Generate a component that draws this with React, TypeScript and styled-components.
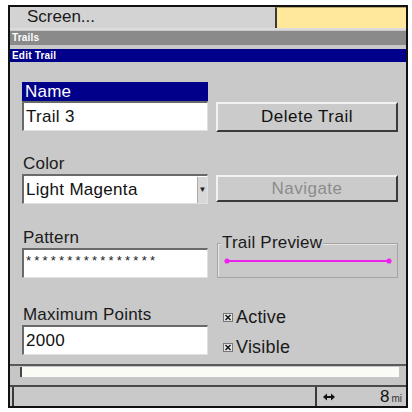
import React from "react";
import styled, { createGlobalStyle } from "styled-components";

const GlobalStyle = createGlobalStyle`
  html, body {
    margin: 0;
    padding: 0;
    background: #ffffff;
  }
  body {
    font-family: "Liberation Sans", Arial, sans-serif;
  }
`;

const Frame = styled.div`
  box-sizing: border-box;
  margin: 5px 0 0 8px;
  width: 400px;
  height: 403px;
  border: 2px solid #111;
  background: #c9c9c9;
  display: flex;
  flex-direction: column;
  color: #111;
`;

const TopBar = styled.div`
  display: flex;
  height: 21px;
  background: #d3d3d3;
  border-bottom: 2px solid #dcdcdc;
`;

const ScreenMenu = styled.div`
  flex: 1;
  padding-left: 17px;
  font-size: 17px;
  line-height: 20px;
  color: #1a1a1a;
`;

const YellowBox = styled.div`
  width: 129px;
  border-left: 2px solid #3a3a3a;
  border-top: 1px solid #b8a870;
  background: #ffe89c;
`;

const TitleBar = styled.div<{ $bg: string; $h: number; $gap: number }>`
  height: ${(p) => p.$h}px;
  margin-top: ${(p) => p.$gap}px;
  background: ${(p) => p.$bg};
  color: #fff;
  font-weight: bold;
  font-size: 10px;
  line-height: ${(p) => p.$h}px;
  padding-left: 2px;
  letter-spacing: 0.2px;
`;

const Body = styled.div`
  flex: 1;
  padding: 20px 0 0 12px;
  display: flex;
  flex-direction: column;
  background: #c9c9c9;
`;

const Row = styled.div<{ $gap: number }>`
  display: grid;
  grid-template-columns: 186px 182px;
  column-gap: 8px;
  margin-top: ${(p) => p.$gap}px;
`;

const Field = styled.div`
  display: flex;
  flex-direction: column;
`;

const Label = styled.div<{ $selected?: boolean }>`
  height: ${(p) => (p.$selected ? 19 : 20)}px;
  line-height: 19px;
  font-size: 17px;
  padding-left: ${(p) => (p.$selected ? 3 : 1)}px;
  background: ${(p) => (p.$selected ? "#00008a" : "transparent")};
  color: ${(p) => (p.$selected ? "#fff" : "#1a1a1a")};
  letter-spacing: 0.2px;
`;

const Input = styled.div`
  box-sizing: border-box;
  height: 30px;
  background: #fff;
  border-top: 2px solid #6a6a6a;
  border-left: 2px solid #6a6a6a;
  border-right: 1px solid #e0e0e0;
  border-bottom: 1px solid #e0e0e0;
  font-size: 17px;
  letter-spacing: 0.3px;
  line-height: 26px;
  padding-left: 2px;
  display: flex;
  align-items: center;
  justify-content: space-between;
  color: #111;
`;

const Stars = styled.span`
  font-size: 13px;
  letter-spacing: 3.2px;
  margin-top: -5px;
  color: #222;
`;

const DropArrow = styled.span`
  width: 9px;
  height: 26px;
  background: #d8d8d8;
  border-left: 1px solid #aaa;
  display: flex;
  align-items: center;
  justify-content: center;
  font-size: 8px;
  color: #222;
`;

const Button = styled.div<{ $disabled?: boolean; $h: number; $mb: number }>`
  box-sizing: border-box;
  align-self: end;
  height: ${(p) => p.$h}px;
  margin-bottom: ${(p) => p.$mb}px;
  background: #cbcbcb;
  border-top: 2px solid #f2f2f2;
  border-left: 2px solid #f2f2f2;
  border-right: 2px solid #3a3a3a;
  border-bottom: 2px solid #3a3a3a;
  display: flex;
  align-items: center;
  justify-content: center;
  font-size: 17px;
  letter-spacing: 0.5px;
  color: ${(p) => (p.$disabled ? "#8c8c8c" : "#111")};
`;

const Group = styled.div`
  align-self: end;
  display: flex;
  flex-direction: column;
  margin-left: 1px;
`;

const GroupTitle = styled.div`
  align-self: flex-start;
  position: relative;
  z-index: 1;
  margin: 0 0 -8px 4px;
  padding: 0 1px;
  background: #c9c9c9;
  font-size: 17px;
  line-height: 16px;
  letter-spacing: 0.2px;
  color: #1a1a1a;
`;

const GroupBox = styled.div`
  box-sizing: border-box;
  height: 35px;
  border: 1px solid #a4a4a4;
  box-shadow: inset 1px 1px 0 #e6e6e6;
  display: flex;
  align-items: center;
  padding: 0 0 0 6px;
`;

const Checks = styled.div`
  display: flex;
  flex-direction: column;
  gap: 10px;
  padding: 2px 0 0 7px;
`;

const CheckRow = styled.div`
  display: flex;
  align-items: center;
  gap: 3px;
  height: 20px;
  font-size: 18px;
  letter-spacing: 0.2px;
  color: #1a1a1a;
`;

const BottomArea = styled.div`
  height: 21px;
  border-top: 2px solid #5a5a5a;
  padding: 1px 7px 0 10px;
  box-sizing: border-box;
  background: #c6c6c6;
`;

const WhiteBar = styled.div`
  height: 10px;
  background: #fbfbf6;
  border-left: 2px solid #444;
`;

const StatusBar = styled.div`
  height: 19px;
  border-top: 2px solid #4a4a4a;
  display: flex;
  background: #c9c9c9;
`;

const StatusLeft = styled.div`
  flex: 1;
  margin-left: 2px;
  border-left: 2px solid #3a3a3a;
`;

const StatusRight = styled.div`
  box-sizing: border-box;
  width: 91px;
  border-left: 2px solid #3a3a3a;
  display: flex;
  align-items: center;
  justify-content: space-between;
  padding: 0 4px 0 6px;
  font-size: 17px;
  color: #111;
`;

const Unit = styled.span`
  font-size: 10px;
  margin-left: 2px;
  color: #333;
`;

const CheckBox: React.FC = () => (
  <svg width="10" height="9" viewBox="0 0 10 9">
    <rect x="0" y="0" width="10" height="9" fill="#e4e4e4" />
    <rect x="0.5" y="0.5" width="9" height="8" fill="none" stroke="#777" />
    <path d="M2.5 2 L7.5 7 M7.5 2 L2.5 7" stroke="#111" strokeWidth="1.4" />
  </svg>
);

const TrailLine: React.FC = () => (
  <svg width="168" height="8" viewBox="0 0 168 8">
    <line x1="3" y1="4" x2="165" y2="4" stroke="#ee22ee" strokeWidth="2" />
    <circle cx="3" cy="4" r="2.6" fill="#ee22ee" />
    <circle cx="165" cy="4" r="2.6" fill="#ee22ee" />
  </svg>
);

const RangeArrow: React.FC = () => (
  <svg width="12" height="8" viewBox="0 0 12 8">
    <path d="M3 4 H9" stroke="#111" strokeWidth="2" />
    <path d="M0 4 L4 0.5 V7.5 Z M12 4 L8 0.5 V7.5 Z" fill="#111" />
  </svg>
);

const App: React.FC = () => {
  return (
    <>
      <GlobalStyle />
      <Frame>
        <TopBar>
          <ScreenMenu>Screen...</ScreenMenu>
          <YellowBox />
        </TopBar>
        <TitleBar $bg="#8a8a8a" $h={14} $gap={1}>
          Trails
        </TitleBar>
        <TitleBar $bg="#00008a" $h={13} $gap={4}>
          Edit Trail
        </TitleBar>
        <Body>
          <Row $gap={0}>
            <Field>
              <Label $selected>Name</Label>
              <Input>Trail 3</Input>
            </Field>
            <Button $h={30} $mb={-1}>
              Delete Trail
            </Button>
          </Row>
          <Row $gap={23}>
            <Field>
              <Label>Color</Label>
              <Input>
                Light Magenta
                <DropArrow>▼</DropArrow>
              </Input>
            </Field>
            <Button $disabled $h={27} $mb={2}>
              Navigate
            </Button>
          </Row>
          <Row $gap={24}>
            <Field>
              <Label>Pattern</Label>
              <Input>
                <Stars>****************</Stars>
              </Input>
            </Field>
            <Group>
              <GroupTitle>Trail Preview</GroupTitle>
              <GroupBox>
                <TrailLine />
              </GroupBox>
            </Group>
          </Row>
          <Row $gap={27}>
            <Field>
              <Label>Maximum Points</Label>
              <Input>2000</Input>
            </Field>
            <Checks>
              <CheckRow>
                <CheckBox />
                Active
              </CheckRow>
              <CheckRow>
                <CheckBox />
                Visible
              </CheckRow>
            </Checks>
          </Row>
        </Body>
        <BottomArea>
          <WhiteBar />
        </BottomArea>
        <StatusBar>
          <StatusLeft />
          <StatusRight>
            <RangeArrow />
            <span>
              8<Unit>mi</Unit>
            </span>
          </StatusRight>
        </StatusBar>
      </Frame>
    </>
  );
};

export default App;
